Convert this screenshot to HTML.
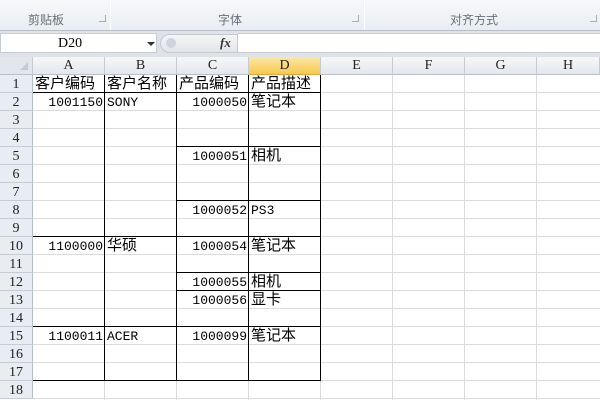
<!DOCTYPE html>
<html><head><meta charset="utf-8"><style>
*{margin:0;padding:0;box-sizing:border-box}
body{width:600px;height:400px;overflow:hidden;background:#fff;position:relative;font-family:"Liberation Mono","Noto Sans CJK SC",monospace}
.a{position:absolute}
.rib{left:0;top:0;width:600px;height:31px;background:linear-gradient(#f7f8fa,#e9edf2);border-bottom:1px solid #b9bfc8}
.lbl{top:11px;font:12px "Liberation Sans","Noto Sans CJK SC",sans-serif;color:#6a6f77}
.sep{top:0;width:1px;height:30px;background:#c5cad2;border-right:1px solid #fff}
.lnch{top:15px;width:7px;height:7px;border:1px solid #a8aeb6;border-top:none;border-left:none}
.ch{top:57px;height:18px;background:linear-gradient(#f6f7f9,#e3e7ec);border-right:1px solid #c6ccd4;border-bottom:1px solid #b9bfc8;font:14px/18px "Liberation Serif",serif;text-align:center;color:#222}
.rh{left:0;width:33px;height:18px;background:#e9edf2;border-bottom:1px solid #c6ccd4;border-right:1px solid #b9bfc8;font:14px/19px "Liberation Serif",serif;text-align:center;color:#222}
.vl{width:1px;background:#dadcdd}
.hl{height:1px;background:#dadcdd;left:33px;width:567px}
.bv{width:1px;background:#000}
.bh{height:1px;background:#000}
.t{font-size:13px;line-height:19px;height:18px;white-space:nowrap;color:#000}
.n{text-align:right;width:70px}
.cj{font-family:"Liberation Mono","Noto Sans CJK SC",sans-serif;font-size:15px;line-height:18px;height:17px;overflow:visible}
</style></head><body>
<div class="a rib"></div>
<div class="a lbl" style="left:28px">剪贴板</div>
<div class="a lnch" style="left:99px"></div>
<div class="a sep" style="left:110px"></div>
<div class="a lbl" style="left:218px">字体</div>
<div class="a lnch" style="left:352px"></div>
<div class="a sep" style="left:364px"></div>
<div class="a lbl" style="left:450px">对齐方式</div>
<div class="a lnch" style="left:590px"></div>
<div class="a" style="left:0;top:31px;width:600px;height:26px;background:#dfe3e8"></div>
<div class="a" style="left:0;top:33px;width:157px;height:20px;background:#fff;border:1px solid #c8cdd4"></div>
<div class="a t" style="left:58px;top:34px;font:14px/19px 'Liberation Serif',serif">D20</div>
<div class="a" style="left:147px;top:42px;width:0;height:0;border-left:4px solid transparent;border-right:4px solid transparent;border-top:4px solid #333"></div>
<div class="a" style="left:160px;top:34px;width:78px;height:19px;background:linear-gradient(#f4f5f7,#e2e5e9);border:1px solid #c4c9d0;border-radius:10px 0 0 10px"></div>
<div class="a" style="left:166px;top:38px;width:10px;height:10px;border-radius:50%;background:#d0d4da"></div>
<div class="a" style="left:220px;top:35px;font:italic bold 13px 'Liberation Serif',serif;color:#333">fx</div>
<div class="a" style="left:238px;top:33px;width:362px;height:20px;background:#fff;border-top:1px solid #c8cdd4;border-bottom:1px solid #c8cdd4"></div>
<div class="a" style="left:0;top:57px;width:33px;height:18px;background:#e3e7ec;border-right:1px solid #c6ccd4;border-bottom:1px solid #b9bfc8"></div>
<div class="a" style="left:20px;top:62px;width:0;height:0;border-left:8px solid transparent;border-bottom:8px solid #c5cad1"></div>
<div class="a ch" style="left:33px;width:72px">A</div>
<div class="a ch" style="left:105px;width:72px">B</div>
<div class="a ch" style="left:177px;width:72px">C</div>
<div class="a ch" style="left:249px;width:72px;background:linear-gradient(#fce7a5,#f6c94e);border-bottom:1px solid #e0a83a">D</div>
<div class="a ch" style="left:321px;width:72px">E</div>
<div class="a ch" style="left:393px;width:72px">F</div>
<div class="a ch" style="left:465px;width:72px">G</div>
<div class="a ch" style="left:537px;width:63px">H</div>
<div class="a vl" style="left:104px;top:75px;height:325px"></div>
<div class="a vl" style="left:176px;top:75px;height:325px"></div>
<div class="a vl" style="left:248px;top:75px;height:325px"></div>
<div class="a vl" style="left:320px;top:75px;height:325px"></div>
<div class="a vl" style="left:392px;top:75px;height:325px"></div>
<div class="a vl" style="left:464px;top:75px;height:325px"></div>
<div class="a vl" style="left:536px;top:75px;height:325px"></div>
<div class="a hl" style="top:92px"></div><div class="a hl" style="top:110px"></div><div class="a hl" style="top:128px"></div><div class="a hl" style="top:146px"></div><div class="a hl" style="top:164px"></div><div class="a hl" style="top:182px"></div><div class="a hl" style="top:200px"></div><div class="a hl" style="top:218px"></div><div class="a hl" style="top:236px"></div><div class="a hl" style="top:254px"></div><div class="a hl" style="top:272px"></div><div class="a hl" style="top:290px"></div><div class="a hl" style="top:308px"></div><div class="a hl" style="top:326px"></div><div class="a hl" style="top:344px"></div><div class="a hl" style="top:362px"></div><div class="a hl" style="top:380px"></div><div class="a hl" style="top:398px"></div>
<div class="a rh" style="top:75px">1</div><div class="a rh" style="top:93px">2</div><div class="a rh" style="top:111px">3</div><div class="a rh" style="top:129px">4</div><div class="a rh" style="top:147px">5</div><div class="a rh" style="top:165px">6</div><div class="a rh" style="top:183px">7</div><div class="a rh" style="top:201px">8</div><div class="a rh" style="top:219px">9</div><div class="a rh" style="top:237px">10</div><div class="a rh" style="top:255px">11</div><div class="a rh" style="top:273px">12</div><div class="a rh" style="top:291px">13</div><div class="a rh" style="top:309px">14</div><div class="a rh" style="top:327px">15</div><div class="a rh" style="top:345px">16</div><div class="a rh" style="top:363px">17</div><div class="a rh" style="top:381px">18</div>
<div class="a t cj" style="left:35px;top:76px">客户编码</div>
<div class="a t cj" style="left:107px;top:76px">客户名称</div>
<div class="a t cj" style="left:179px;top:76px">产品编码</div>
<div class="a t cj" style="left:251px;top:76px">产品描述</div>
<div class="a t n" style="left:33px;top:93px">1001150</div>
<div class="a t" style="left:107px;top:93px">SONY</div>
<div class="a t n" style="left:177px;top:93px">1000050</div>
<div class="a t cj" style="left:251px;top:94px">笔记本</div>
<div class="a t n" style="left:177px;top:147px">1000051</div>
<div class="a t cj" style="left:251px;top:148px">相机</div>
<div class="a t n" style="left:177px;top:201px">1000052</div>
<div class="a t" style="left:251px;top:201px">PS3</div>
<div class="a t n" style="left:33px;top:237px">1100000</div>
<div class="a t cj" style="left:107px;top:238px">华硕</div>
<div class="a t n" style="left:177px;top:237px">1000054</div>
<div class="a t cj" style="left:251px;top:238px">笔记本</div>
<div class="a t n" style="left:177px;top:273px">1000055</div>
<div class="a t cj" style="left:251px;top:274px">相机</div>
<div class="a t n" style="left:177px;top:291px">1000056</div>
<div class="a t cj" style="left:251px;top:292px">显卡</div>
<div class="a t n" style="left:33px;top:327px">1100011</div>
<div class="a t" style="left:107px;top:327px">ACER</div>
<div class="a t n" style="left:177px;top:327px">1000099</div>
<div class="a t cj" style="left:251px;top:328px">笔记本</div>
<div class="a bv" style="left:104px;top:75px;height:306px"></div>
<div class="a bv" style="left:176px;top:75px;height:306px"></div>
<div class="a bv" style="left:248px;top:75px;height:306px"></div>
<div class="a bv" style="left:320px;top:75px;height:306px"></div>
<div class="a bh" style="left:33px;width:288px;top:92px"></div>
<div class="a bh" style="left:33px;width:288px;top:236px"></div>
<div class="a bh" style="left:33px;width:288px;top:326px"></div>
<div class="a bh" style="left:33px;width:288px;top:380px"></div>
<div class="a bh" style="left:177px;width:144px;top:146px"></div>
<div class="a bh" style="left:177px;width:144px;top:200px"></div>
<div class="a bh" style="left:177px;width:144px;top:272px"></div>
<div class="a bh" style="left:177px;width:144px;top:290px"></div>
</body></html>
